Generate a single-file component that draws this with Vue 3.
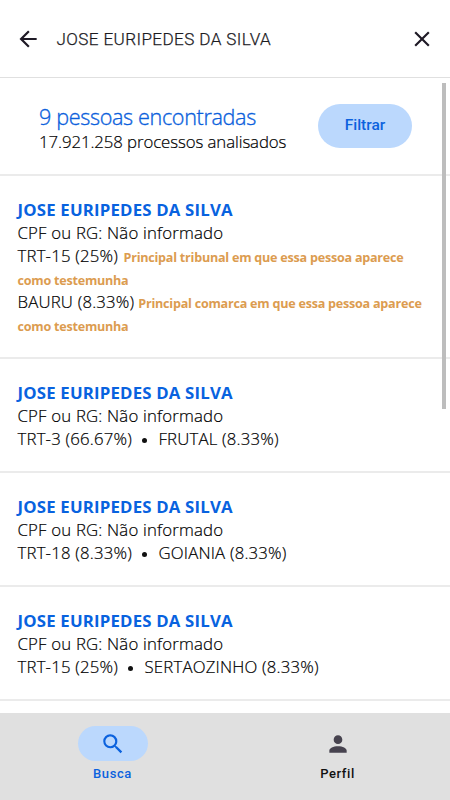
<script setup>
const people = [
  {
    name: 'JOSE EURIPEDES DA SILVA',
    places: [
      { label: 'TRT-15 (25%)', hint: ['Principal tribunal em que essa pessoa aparece', 'como testemunha'], kind: 'court' },
      { label: 'BAURU (8.33%)', hint: ['Principal comarca em que essa pessoa aparece', 'como testemunha'], kind: 'district' },
    ],
  },
  { name: 'JOSE EURIPEDES DA SILVA', court: 'TRT-3 (66.67%)', district: 'FRUTAL (8.33%)' },
  { name: 'JOSE EURIPEDES DA SILVA', court: 'TRT-18 (8.33%)', district: 'GOIANIA (8.33%)' },
  { name: 'JOSE EURIPEDES DA SILVA', court: 'TRT-15 (25%)', district: 'SERTAOZINHO (8.33%)' },
]
</script>

<template>
  <div class="screen">
    <header class="searchbar">
      <svg class="icon" viewBox="0 0 24 24"><path d="M20 11v2H8l5.5 5.5-1.42 1.42L4.16 12l7.92-7.92L13.5 5.5 8 11h12z" /></svg>
      <span class="query">JOSE EURIPEDES DA SILVA</span>
      <svg class="icon" viewBox="0 0 24 24"><path d="M19 6.41 17.59 5 12 10.59 6.41 5 5 6.41 10.59 12 5 17.59 6.41 19 12 13.41 17.59 19 19 17.59 13.41 12z" /></svg>
    </header>
    <main class="results">
      <section class="summary">
        <div class="counts">
          <div class="found">9 pessoas encontradas</div>
          <div class="analysed">17.921.258 processos analisados</div>
        </div>
        <button class="filter">Filtrar</button>
      </section>
      <article v-for="(p, i) in people" :key="i" class="person">
        <div class="name">{{ p.name }}</div>
        <div class="doc">CPF ou RG: Não informado</div>
        <template v-if="p.places">
          <div v-for="place in p.places" :key="place.label" class="place">
            <span class="label" :class="place.kind">{{ place.label }}</span>
            <span class="hint">{{ place.hint[0] }}<br />{{ place.hint[1] }}</span>
          </div>
        </template>
        <div v-else class="pair">
          <span>{{ p.court }}</span><span class="dot"></span><span>{{ p.district }}</span>
        </div>
      </article>
      <div class="scrollbar"></div>
    </main>
    <nav class="tabs">
      <div class="tab active">
        <span class="pill"><svg viewBox="0 0 24 24"><path d="M9.5 3A6.5 6.5 0 0 1 16 9.5c0 1.61-.59 3.09-1.56 4.23l.27.27h.79l5 5-1.5 1.5-5-5v-.79l-.27-.27A6.52 6.52 0 0 1 9.5 16a6.5 6.5 0 0 1 0-13m0 2C7 5 5 7 5 9.5S7 14 9.5 14 14 12 14 9.5 12 5 9.5 5z" /></svg></span>
        <span class="caption">Busca</span>
      </div>
      <div class="tab">
        <span class="pill"><svg viewBox="0 0 24 24"><path d="M12 4a4 4 0 1 1 0 8 4 4 0 0 1 0-8m0 10c4.42 0 8 1.79 8 4v2H4v-2c0-2.21 3.58-4 8-4z" /></svg></span>
        <span class="caption">Perfil</span>
      </div>
    </nav>
  </div>
</template>

<style>
body { background: #fff; }
</style>

<style scoped>
.screen {
  display: flex;
  flex-direction: column;
  width: 450px;
  height: 800px;
  overflow: hidden;
  background: #fff;
  color: #000;
  font-family: "Open Sans", "Noto Sans", sans-serif;
}
.searchbar {
  display: flex;
  flex: none;
  align-items: center;
  box-sizing: border-box;
  height: 78px;
  padding: 1px 15.5px 0 15px;
  border-bottom: 1px solid #e0e0e0;
}
.icon { width: 26px; height: 26px; fill: #1f1a26; }
.query {
  flex: 1;
  padding-left: 15.5px;
  font-family: Roboto, sans-serif;
  font-size: 17.1px;
  font-weight: 300;
  letter-spacing: .39px;
  -webkit-text-stroke: .25px #1c1b1f;
  color: #1c1b1f;
}
.results {
  position: relative;
  flex: 1;
  min-height: 0;
  overflow: hidden;
}
.summary {
  display: flex;
  align-items: center;
  justify-content: space-between;
  box-sizing: border-box;
  height: 98px;
  padding: 0 38px 0 39px;
  border-bottom: 2px solid #ebebeb;
}
.counts { padding-top: 4px; white-space: nowrap; }
.found {
  font-size: 21.6px;
  font-weight: 300;
  line-height: 27px;
  letter-spacing: -.35px;
  -webkit-text-stroke: .35px #0b5fdc;
  color: #0b5fdc;
}
.analysed {
  font-size: 16.8px;
  font-weight: 300;
  line-height: 23px;
  letter-spacing: -.08px;
  -webkit-text-stroke: .2px #000;
}
.filter {
  width: 94px;
  height: 44px;
  padding: 0 0 2px;
  border: 0;
  border-radius: 22px;
  background: #bbd8fd;
  color: #0b62de;
  font-family: Roboto, sans-serif;
  font-size: 15.5px;
  font-weight: 500;
}
.person {
  padding: 23.4px 17.5px 20.2px;
  border-bottom: 2px solid #ebebeb;
  font-size: 16.8px;
  font-weight: 300;
  line-height: 22.86px;
  letter-spacing: .18px;
  white-space: nowrap;
}
.doc, .label, .pair { -webkit-text-stroke: .2px #000; }
.name { font-weight: 700; letter-spacing: .18px; color: #0862df; }
.court { margin-right: 1.5px; }
.hint {
  margin-left: 4px;
  font-size: 12.6px;
  font-weight: 700;
  line-height: 18px;
  letter-spacing: -.24px;
  color: #dc9c50;
}
.pair { display: flex; align-items: center; }
.dot {
  width: 5px;
  height: 5px;
  margin: 2px 11px 0 10.5px;
  border-radius: 50%;
  background: #111;
}
.scrollbar {
  position: absolute;
  top: 5px;
  right: 4px;
  width: 4px;
  height: 326px;
  background: #bdbdbd;
}
.tabs {
  display: flex;
  flex: none;
  height: 87px;
  background: #e0e0e0;
}
.tab {
  display: flex;
  flex: 1;
  flex-direction: column;
  align-items: center;
  padding-top: 13px;
  color: #111;
}
.pill {
  display: flex;
  align-items: center;
  justify-content: center;
  width: 70px;
  height: 35px;
  border-radius: 18px;
}
.pill svg { width: 26px; height: 26px; fill: #47434f; }
.active .pill { background: #bbd8fd; }
.active .pill svg { fill: #0b62de; }
.caption {
  margin-top: 4px;
  font-family: Roboto, sans-serif;
  font-size: 13px;
  font-weight: 500;
  line-height: 18px;
  letter-spacing: .6px;
}
.active .caption { color: #0b62de; }
</style>
